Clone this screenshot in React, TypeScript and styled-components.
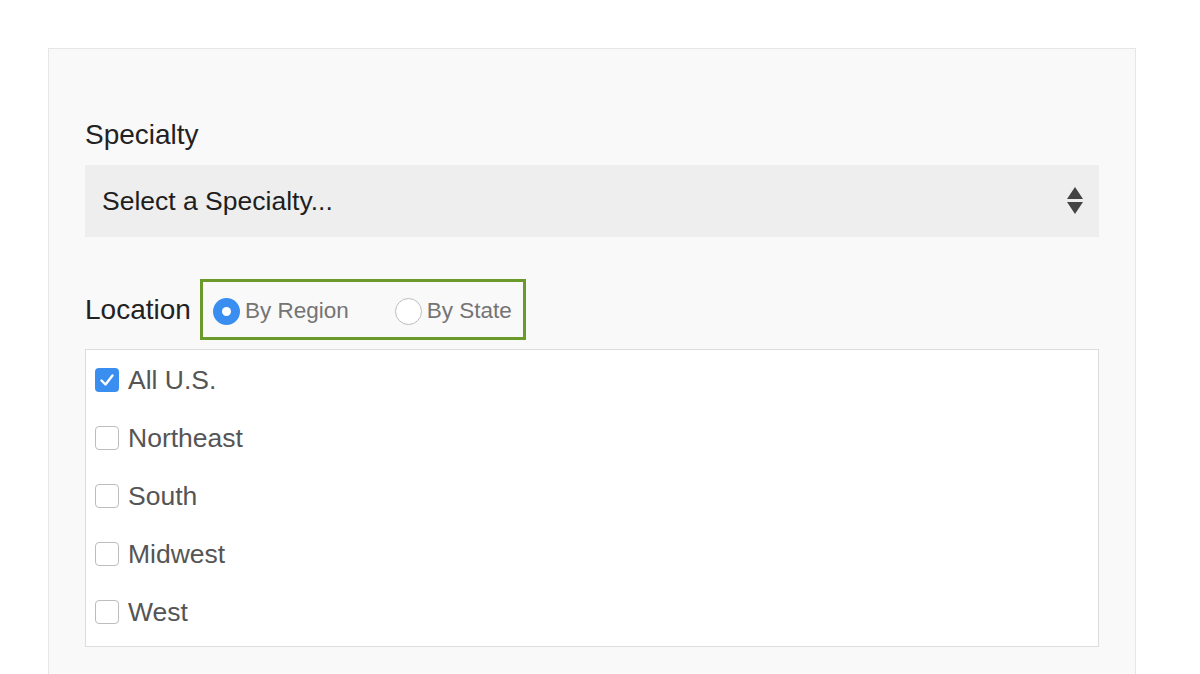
import React from 'react'
import styled, { createGlobalStyle } from 'styled-components'

const Global = createGlobalStyle`
  html, body {
    margin: 0;
    padding: 0;
    background: #ffffff;
    font-family: "Liberation Sans", Arial, sans-serif;
    overflow: hidden;
  }
`

const Page = styled.div`
  padding: 48px 64px 0 48px;
  height: 674px;
  box-sizing: border-box;
  overflow: hidden;
  display: flex;
  flex-direction: column;
`

const Panel = styled.div`
  flex: 1;
  background: #f9f9f9;
  border: 1px solid #e6e6e6;
  border-bottom: none;
  padding: 72px 36px 0 36px;
`

const Label = styled.div`
  font-size: 28px;
  line-height: 28px;
  color: #222;
`

const Select = styled.div`
  margin-top: 16px;
  height: 72px;
  background: #eeeeee;
  display: flex;
  align-items: center;
  justify-content: space-between;
  padding: 0 16px 0 17px;
  font-size: 26.5px;
  color: #1e1e1e;
`

const LocationRow = styled.div`
  margin-top: 42px;
  display: flex;
  align-items: center;
  gap: 9px;
`

const RadioGroup = styled.div`
  border: 3px solid #6b9a2c;
  height: 55px;
  display: flex;
  align-items: center;
  padding: 0 11px 0 10px;
  gap: 46px;
`

const RadioOption = styled.label`
  display: flex;
  align-items: center;
  gap: 5px;
  font-size: 22.5px;
  color: #747474;
  margin-top: 3px;
`

const RadioDot = styled.span<{ $on?: boolean }>`
  width: 27px;
  height: 27px;
  border-radius: 50%;
  box-sizing: border-box;
  display: flex;
  align-items: center;
  justify-content: center;
  background: ${(p) => (p.$on ? '#3a8ef0' : '#ffffff')};
  border: ${(p) => (p.$on ? 'none' : '1px solid #bdbdbd')};
  &::after {
    content: '';
    display: ${(p) => (p.$on ? 'block' : 'none')};
    width: 9px;
    height: 9px;
    border-radius: 50%;
    background: #fff;
  }
`

const List = styled.div`
  margin-top: 9px;
  background: #ffffff;
  border: 1px solid #dddddd;
  padding: 1px 0 5px 9px;
`

const Item = styled.label`
  height: 58px;
  display: flex;
  align-items: center;
  gap: 9px;
  font-size: 26.5px;
  color: #555;
`

const Box = styled.span<{ $on?: boolean }>`
  width: 24px;
  height: 24px;
  border-radius: 4px;
  box-sizing: border-box;
  display: flex;
  align-items: center;
  justify-content: center;
  background: ${(p) => (p.$on ? '#3a8ef0' : '#ffffff')};
  border: ${(p) => (p.$on ? 'none' : '1.5px solid #bdbdbd')};
`

const Arrows = () => (
  <svg width="16" height="28" viewBox="0 0 16 28">
    <polygon points="8,0 16,12 0,12" fill="#444" />
    <polygon points="0,15 16,15 8,27" fill="#444" />
  </svg>
)

const Check = () => (
  <svg width="18" height="18" viewBox="0 0 18 18">
    <path d="M3.5 9.5 L7.5 13.5 L14.5 4.5" fill="none" stroke="#fff" strokeWidth="2.4" strokeLinecap="round" strokeLinejoin="round" />
  </svg>
)

const regions = ['All U.S.', 'Northeast', 'South', 'Midwest', 'West']

export default function App() {
  return (
    <Page>
      <Global />
      <Panel>
        <Label>Specialty</Label>
        <Select>
          <span>Select a Specialty...</span>
          <Arrows />
        </Select>
        <LocationRow>
          <Label>Location</Label>
          <RadioGroup>
            <RadioOption>
              <RadioDot $on />
              By Region
            </RadioOption>
            <RadioOption>
              <RadioDot />
              By State
            </RadioOption>
          </RadioGroup>
        </LocationRow>
        <List>
          {regions.map((r, i) => (
            <Item key={r}>
              <Box $on={i === 0}>{i === 0 && <Check />}</Box>
              {r}
            </Item>
          ))}
        </List>
      </Panel>
    </Page>
  )
}
